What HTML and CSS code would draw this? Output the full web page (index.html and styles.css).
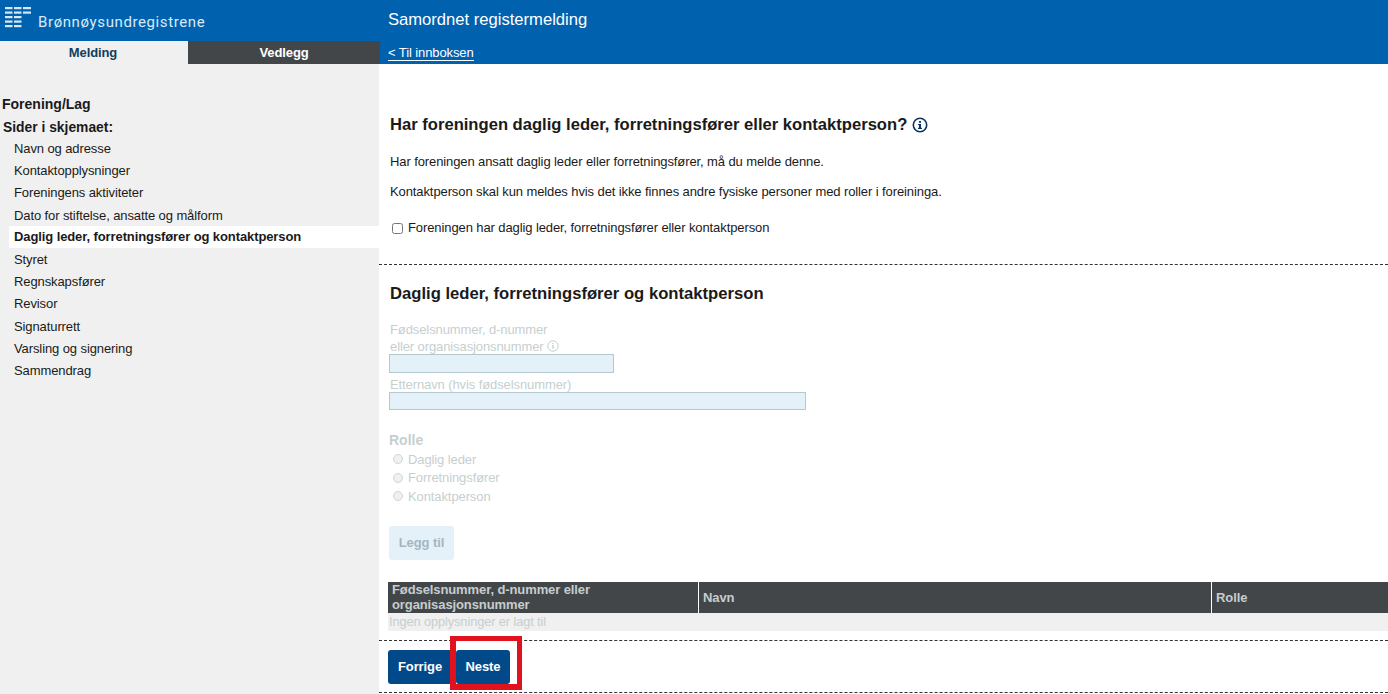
FILE: index.html
```html
<!DOCTYPE html>
<html lang="no">
<head>
<meta charset="utf-8">
<title>Samordnet registermelding</title>
<link rel="stylesheet" href="styles.css">
</head>
<body>
<div class="page">
  <aside class="side">
    <div class="brand">
      <svg class="logo" width="26" height="21" viewBox="0 0 26 21">
        <g fill="#d5e8f6">
          <rect x="0" y="0" width="7.5" height="2.2"/><rect x="9" y="0" width="7.5" height="2.2"/><rect x="18" y="0" width="8" height="2.2"/>
          <rect x="0" y="4.5" width="7.5" height="2.2"/><rect x="9" y="4.5" width="7.5" height="2.2"/><rect x="18" y="4.5" width="8" height="2.2"/>
          <rect x="0" y="9" width="7.5" height="2.2"/><rect x="9" y="9" width="7.5" height="2.2"/>
          <rect x="0" y="13.5" width="7.5" height="2.2"/><rect x="9" y="13.5" width="7.5" height="2.2"/>
          <rect x="0" y="18" width="7.5" height="2.2"/><rect x="9" y="18" width="7.5" height="2.2"/>
        </g>
      </svg>
      <span class="brand-name">Brønnøysundregistrene</span>
    </div>
    <div class="tabs">
      <div class="tab tab-active">Melding</div>
      <div class="tab tab-dark">Vedlegg</div>
    </div>
    <div class="side-body">
      <div class="form-type">Forening/Lag</div>
      <div class="nav-title">Sider i skjemaet:</div>
      <ul class="nav">
        <li>Navn og adresse</li>
        <li>Kontaktopplysninger</li>
        <li>Foreningens aktiviteter</li>
        <li>Dato for stiftelse, ansatte og målform</li>
        <li class="current">Daglig leder, forretningsfører og kontaktperson</li>
        <li>Styret</li>
        <li>Regnskapsfører</li>
        <li>Revisor</li>
        <li>Signaturrett</li>
        <li>Varsling og signering</li>
        <li>Sammendrag</li>
      </ul>
    </div>
  </aside>
  <main class="main">
    <header class="top">
      <div class="title">Samordnet registermelding</div>
      <div class="back-row"><a class="back">&lt; Til innboksen</a></div>
    </header>
    <section class="intro">
      <h2 class="q">Har foreningen daglig leder, forretningsfører eller kontaktperson?
        <svg class="info" width="16" height="16" viewBox="0 0 16 16"><circle cx="8" cy="8" r="6.7" fill="none" stroke="#0b3560" stroke-width="1.6"/><rect x="7" y="7" width="2" height="4.5" fill="#0b3560"/><rect x="6" y="10.8" width="4" height="1.2" fill="#0b3560"/><rect x="6" y="7" width="2" height="1.1" fill="#0b3560"/><rect x="7" y="4" width="2" height="1.8" fill="#0b3560"/></svg>
      </h2>
      <p class="p1">Har foreningen ansatt daglig leder eller forretningsfører, må du melde denne.</p>
      <p class="p2">Kontaktperson skal kun meldes hvis det ikke finnes andre fysiske personer med roller i foreininga.</p>
      <label class="check"><input type="checkbox"> Foreningen har daglig leder, forretningsfører eller kontaktperson</label>
    </section>
    <section class="details">
      <h2 class="h">Daglig leder, forretningsfører og kontaktperson</h2>
      <div class="disabled">
        <div class="lbl lbl1">Fødselsnummer, d-nummer<br>eller organisasjonsnummer
          <svg class="info-s" width="12" height="12" viewBox="0 0 12 12"><circle cx="6" cy="6" r="5.2" fill="none" stroke="#c4cfd0"/><rect x="5.3" y="5" width="1.4" height="3.6" fill="#c4cfd0"/><rect x="5.3" y="3" width="1.4" height="1.2" fill="#c4cfd0"/></svg>
        </div>
        <div class="inp inp-short"></div>
        <div class="lbl lbl2">Etternavn (hvis fødselsnummer)</div>
        <div class="inp inp-long"></div>
        <div class="rolle">Rolle</div>
        <label class="radio"><span class="dot"></span>Daglig leder</label>
        <label class="radio"><span class="dot"></span>Forretningsfører</label>
        <label class="radio"><span class="dot"></span>Kontaktperson</label>
        <div class="add">Legg til</div>
      </div>
      <div class="tbl">
        <div class="thead">
          <div class="th th1">Fødselsnummer, d-nummer eller organisasjonsnummer</div>
          <div class="th th2">Navn</div>
          <div class="th th3">Rolle</div>
        </div>
        <div class="empty">Ingen opplysninger er lagt til</div>
      </div>
    </section>
    <section class="actions">
      <button class="btn">Forrige</button>
      <button class="btn btn-next">Neste</button>
      <div class="mark"></div>
    </section>
  </main>
</div>
</body>
</html>
```
FILE: styles.css
```css
* { box-sizing: border-box; }
html, body { margin: 0; padding: 0; height: 694px; overflow: hidden; background: #fff; }
body { font-family: "Liberation Sans", Arial, sans-serif; font-size: 13px; letter-spacing: -0.1px; color: #1a1a1a; }
.page { display: grid; grid-template-columns: 379px 1fr; height: 694px; }
.side { background: #f0f0f0; display: flex; flex-direction: column; }
.brand { height: 41px; background: #0061af; display: flex; padding: 7px 0 0 5px; }
.logo { flex: none; }
.brand-name { font-family: Roboto, sans-serif; font-size: 15px; color: #d8ebf8; margin: 5px 0 0 7px; line-height: 20px; letter-spacing: 0.6px; }
.tabs { display: flex; height: 23px; position: relative; }
.tab { font-weight: 700; text-align: center; line-height: 23px; flex: none; }
.tab-active { width: 188px; padding-right: 2px; color: #103e5c; background: #f0f0f0; }
.tab-dark { width: 192px; background: #434649; color: #fff; }
.side-body { padding: 31px 0 0 0; }
.form-type { font-weight: 700; font-size: 14px; letter-spacing: 0; padding-left: 2px; line-height: 18px; }
.nav-title { font-weight: 700; font-size: 13.85px; letter-spacing: 0; padding-left: 3px; line-height: 18px; margin-top: 5px; }
.nav { list-style: none; margin: 1px 0 0 9px; padding: 0; }
.nav li { height: 22.2px; line-height: 24px; padding-left: 5px; }
.nav .current { background: #fff; font-weight: 700; line-height: 22px; }
.main { display: flex; flex-direction: column; min-width: 0; }
.top { height: 64px; background: #0061af; color: #fff; padding-left: 9px; }
.title { font-size: 16.6px; letter-spacing: 0; line-height: 20px; padding-top: 10px; height: 41px; }
.back-row { height: 23px; display: flex; }
.back { color: #fff; border-bottom: 1px solid #fff; height: 20px; line-height: 23px; }
.intro { height: 201px; border-bottom: 1px dashed #333; padding: 51px 0 0 11px; }
.q { font-size: 16.6px; letter-spacing: 0; line-height: 20px; margin: 0; font-weight: 700; display: flex; align-items: center; gap: 5px; }
.p1 { margin: 18px 0 0; line-height: 18px; }
.p2 { margin: 12px 0 0; line-height: 18px; }
.check { display: flex; align-items: center; margin-top: 18px; line-height: 18px; padding-left: 2px; }
.check input { margin: 0 5px 0 0; width: 11px; height: 11px; }
.details { height: 376px; border-bottom: 1px dashed #333; padding: 19px 0 0 10px; }
.h { font-size: 16.65px; letter-spacing: 0; line-height: 20px; margin: 0 0 0 1px; }
.disabled { color: #c6cfd0; }
.lbl { margin: 17px 0 0 1px; line-height: 17px; }
.lbl1 { height: 33px; }
.lbl2 { margin-top: 0; padding-top: 4px; height: 19px; line-height: 16px; }
.info-s { vertical-align: -1px; }
.inp { background: #e4f1f8; border: 1px solid #b4c8d0; }
.inp-short { width: 225px; height: 19px; }
.inp-long { width: 417px; height: 18px; }
.rolle { font-weight: 700; font-size: 14px; letter-spacing: 0; margin: 21px 0 1px 0; line-height: 18px; }
.radio { display: flex; align-items: center; height: 18.5px; padding-left: 4px; }
.dot { width: 10px; height: 10px; border: 1px solid #d0d5d6; border-radius: 50%; background: #f0f0f0; margin-right: 5px; }
.add { width: 65px; height: 34px; margin-top: 20px; background: #e4f1f8; border-radius: 3px; color: #a5b6c0; font-weight: 700; text-align: center; line-height: 34px; }
.tbl { margin: 22px 0 0 -1px; }
.thead { display: flex; background: #434649; height: 31px; color: #c5cdce; font-weight: 700; }
.th { padding: 0 4px; line-height: 15px; display: flex; align-items: center; border-right: 1px solid #fff; }
.th1 { width: 311px; }
.th2 { width: 513px; }
.th3 { flex: 1; border-right: 0; }
.empty { background: #f0f0f0; height: 18px; line-height: 18px; color: #c6cfd0; padding-left: 1px; font-size: 12.8px; }
.actions { height: 52px; border-bottom: 1px dashed #333; padding: 9px 0 0 9px; display: flex; align-items: flex-start; position: relative; }
.btn { width: 64px; height: 34px; border: 0; border-radius: 3px; padding: 0 0 2px; background: #02498a; color: #fff; font: 700 13px "Liberation Sans", Arial, sans-serif; letter-spacing: -0.1px; }
.btn-next { width: 54px; margin-left: 4px; }
.mark { position: absolute; left: 71px; top: -5px; width: 72px; height: 54px; border-style: solid; border-width: 5px 5px 6px 6px; border-color: #e0121d; }
```
